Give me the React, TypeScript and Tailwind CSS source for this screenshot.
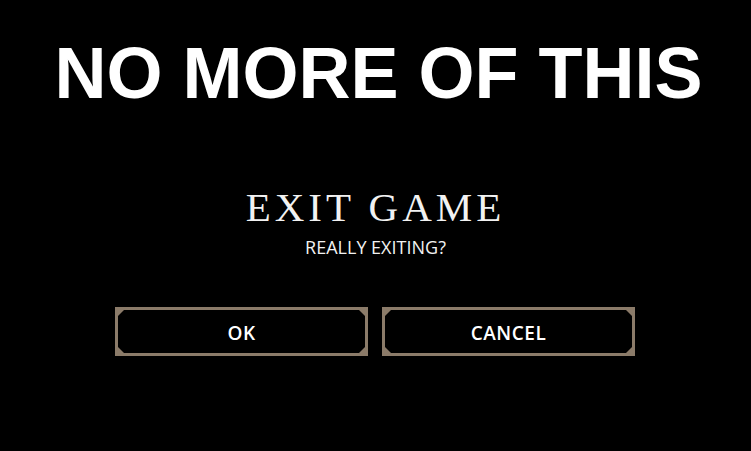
import React from "react";

function Corner({ pos }: { pos: string }) {
    return (
        <svg width="6" height="6" viewBox="0 0 6 6" className={`absolute ${pos}`}>
            <polygon points="0,0 6,0 0,6" fill="#8b7b69" />
        </svg>
    );
}

function FrameButton({ label }: { label: string }) {
    return (
        <button className="relative w-[253px] h-[49px] border-[3px] border-[#8b7b69] bg-black flex items-center justify-center">
            <Corner pos="top-0 left-0" />
            <Corner pos="top-0 right-0 rotate-90" />
            <Corner pos="bottom-0 right-0 rotate-180" />
            <Corner pos="bottom-0 left-0 -rotate-90" />
            <span className="mt-[3px] text-white text-[19px] font-semibold tracking-[0.5px] font-['Open_Sans',sans-serif] leading-none">{label}</span>
        </button>
    );
}

export default function App() {
    return (
        <div className="w-[751px] h-[451px] bg-black flex flex-col items-center overflow-hidden">
            <h1 className="mt-[35px] ml-[6px] text-white text-[72px] font-bold leading-[76px] font-['Liberation_Sans',Arial,sans-serif]">NO MORE OF THIS</h1>

            <h2 className="mt-[76px] text-[#f2f2f2] text-[41px] leading-[40px] tracking-[4px] font-['Liberation_Serif',serif]">EXIT GAME</h2>
            <p className="mt-[10px] text-[#f2f2f2] text-[18px] leading-[20px] font-['Open_Sans',sans-serif]">REALLY EXITING?</p>

            <div className="mt-[50px] flex gap-[14px] ml-[-1px]">
                <FrameButton label="OK" />
                <FrameButton label="CANCEL" />
            </div>
        </div>
    );
}
